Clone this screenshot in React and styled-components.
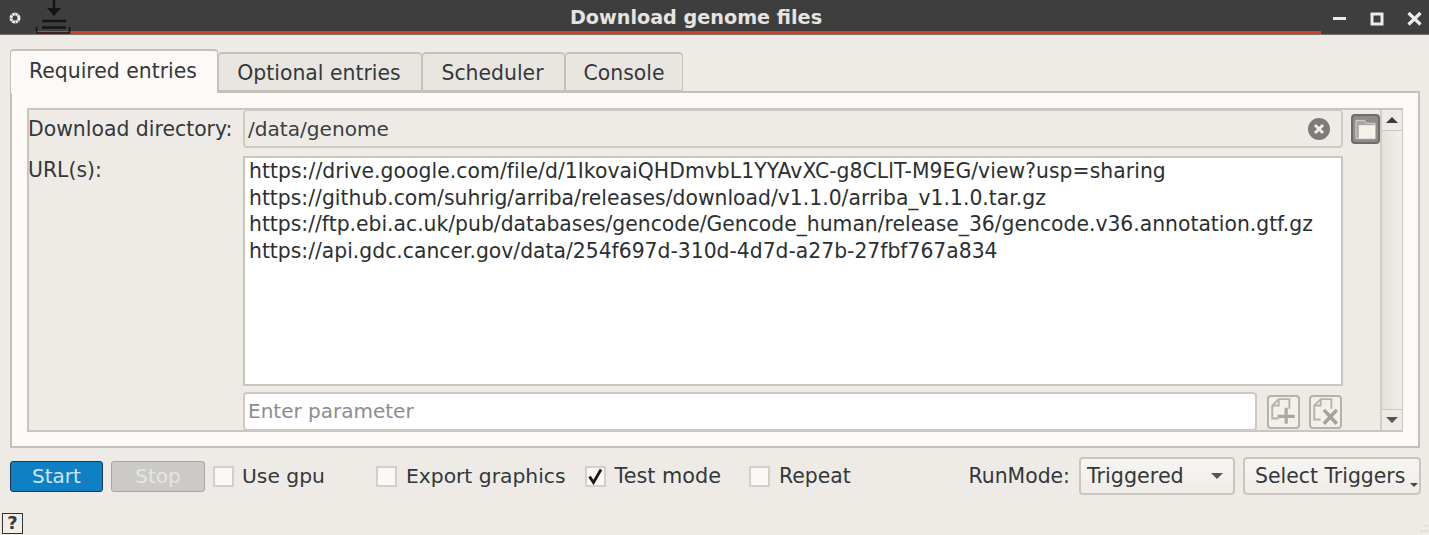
import React from "react";
import styled, { createGlobalStyle } from "styled-components";

const Global = createGlobalStyle`
  html, body { margin: 0; padding: 0; width: 1429px; height: 535px; overflow: hidden; background: #eeebe7; }
  * { box-sizing: border-box; }
  body { font-family: "DejaVu Sans", sans-serif; font-size: 20.4px; color: #2e3436; }
`;

const Win = styled.div`
  width: 1429px; height: 535px; display: flex; flex-direction: column; position: relative; background: #eeebe7;
`;
const TitleBar = styled.div`
  height: 35px; flex: none; background: #3e3e3e; position: relative; display: flex; align-items: center;
  border-bottom: 1px solid #77746f;
`;
const RedLine = styled.div`
  position: absolute; left: 35px; width: 1286px; top: 31px; height: 3px; background: #cf412e;
`;
const TitleText = styled.div`
  position: absolute; left: 0; right: 37px; top: 6px; text-align: center; font-weight: 700; font-size: 19.2px; color: #e6e4e0; line-height: 24px;
`;
const GearSlot = styled.svg`
  position: absolute; left: 8px; top: 11px;
`;
const AppIcon = styled.svg`
  position: absolute; left: 35px; top: 0;
`;
const WinButtons = styled.div`
  position: absolute; right: 0; top: 0; height: 34px; width: 110px;
`;
const WinSvg = styled.svg`position: absolute; left: 0; top: 0;`;

const Body = styled.div`
  flex: 1; padding: 14px 9px 0 10px; display: flex; flex-direction: column;
`;
const Tabs = styled.div`
  display: flex; align-items: flex-end; height: 42px; position: relative; z-index: 1;
`;
const Tab = styled.div`
  height: ${p => (p.$active ? "44px" : "39px")};
  width: ${p => p.$w}px;
  margin-bottom: ${p => (p.$active ? "-2px" : "0")};
  background: ${p => (p.$active ? "#fcf9f6" : "#e9e6e2")};
  border: 1px solid #c4c1bb;
  border-width: 2px 1.5px 0 1.5px;
  border-bottom: ${p => (p.$active ? "none" : "1px solid #c4c1bb")};
  border-radius: 4px 4px 0 0;
  text-align: center;
  padding-right: ${p => p.$pr ?? 2}px;
  line-height: ${p => (p.$active ? "40px" : "38px")};
  font-size: 20.4px;
  color: #33383a;
`;
const Panel = styled.div`
  width: 1410px; height: 357px; background: #fcf9f6; border: 2px solid #c4c1bb; padding: 15px 15px 14px;
`;
const Scroll = styled.div`
  height: 100%; width: 100%; background: #eeebe7; border: 2px solid #c9c6c0; border-right-width: 1px; display: flex;
`;
const FormArea = styled.div`
  flex: 1; display: grid; grid-template-columns: 214px 1100px 1fr; grid-template-rows: 38px 238px 45px; align-content: start;
`;
const Label = styled.div`
  line-height: 38px; font-size: 20.4px; color: #33383a; white-space: nowrap; margin-left: -1px;
`;
const UrlLabel = styled(Label)`
  line-height: 26px; padding-top: 9px;
`;
const DirField = styled.div`
  height: 38px; background: #eeebe7; border: 2px solid #cdcac4; border-top-width: 1px; border-radius: 4px; display: flex; align-items: center;
  padding: 0 11px 0 3px; justify-content: space-between; color: #3a3f41; font-size: 20.1px;
`;
const FolderCell = styled.div`
  padding: 4px 0 0 8px;
`;
const TextCell = styled.div`
  padding-top: 8px;
`;
const UrlBox = styled.div`
  background: #fff; border: 2px solid #c9c6c0; height: 230px; padding: 0 4px; font-size: 20.33px; line-height: 26.6px; color: #2b2f31; white-space: nowrap;
`;
const UrlLine = styled.div`
  letter-spacing: ${p => p.$ls}px;
`;
const EmptyCell = styled.div``;
const ParamRow = styled.div`
  grid-column: 2; display: flex; align-items: center; height: 39px; justify-content: space-between; margin-top: 6px;
`;
const ParamInput = styled.div`
  width: 1014px; height: 39px; background: #fff; border: 2px solid #cdcac4; border-radius: 4px; padding: 0 3px; line-height: 35px; color: #8b8d8d; font-size: 20px;
`;
const ParamButtons = styled.div`display: flex; gap: 9px; margin-right: 1px;`;
const IconBtn = styled.div`
  width: 33px; height: 34px; border: 2px solid #b5b2ac; border-radius: 4px; background: #f3f0ec; display: flex; align-items: center; justify-content: center;
`;
const FolderBtn = styled.div`
  width: 29px; height: 30px; border: 2px solid #6f6d69; border-radius: 4px; background: #8f8d89; display: flex; align-items: center; justify-content: center;
`;
const ScrollBar = styled.div`
  width: 22px; flex: none; border-left: 2px solid #cfccc6; background: linear-gradient(90deg, #e4e1dc, #f2efeb); display: flex; flex-direction: column; justify-content: space-between;
`;
const ArrowCell = styled.div`
  height: 21px; background: #eeebe7; display: flex; align-items: center; justify-content: center;
  border-${p => p.$edge}: 1px solid #c9c6c0;
`;
const Controls = styled.div`
  display: flex; align-items: center; height: 32px; margin-top: 12px; position: relative;
`;
const Btn = styled.div`
  width: ${p => p.$w}px; height: 31px; margin-right: 8px; border-radius: 3px; text-align: center; line-height: 28px; font-size: 20px;
  background: ${p => (p.$primary ? "#0f80c4" : "#cbcac8")};
  border: 1.5px solid ${p => (p.$primary ? "#173a52" : "#a8a6a2")};
  color: ${p => (p.$primary ? "#cfe6f5" : "#e6e5e3")};
`;
const Check = styled.label`
  display: flex; align-items: center; margin-right: ${p => p.$mr}px; font-size: ${p => p.$size ?? 20.3}px; color: #33383a; white-space: nowrap;
`;
const Box = styled.span`
  width: 21px; height: 21px; background: #fbf9f7; border: 2px solid #d3d0ca; margin-right: ${p => p.$gap ?? 9}px; display: inline-flex; align-items: center; justify-content: center; flex: none;
`;
const Spacer = styled.div`flex: 1;`;
const RunLabel = styled.div`
  font-size: 20.4px; color: #33383a; margin-right: 9px;
`;
const Combo = styled.div`
  width: 156px; height: 38px; border: 2px solid #c9c6c0; border-radius: 4px; background: linear-gradient(#f7f5f2, #efece8); display: flex; align-items: center; justify-content: space-between; padding: 0 10px 0 6px; margin-right: 8px; color: #33383a; font-size: 20.7px;
`;
const Caret = styled.span`
  width: 0; height: 0; border-left: 6px solid transparent; border-right: 6px solid transparent; border-top: 6px solid #555;
`;
const TriggerBtn = styled.div`
  width: 178px; height: 38px; margin-right: -1px; border: 2px solid #c9c6c0; border-radius: 4px; background: linear-gradient(#f7f5f2, #efece8); padding: 0 0 0 10px; line-height: 35px; color: #33383a; position: relative; white-space: nowrap;
`;
const SmallCaret = styled.span`
  position: absolute; right: 1px; bottom: 6px; width: 0; height: 0; border-left: 4.5px solid transparent; border-right: 4.5px solid transparent; border-top: 4.5px solid #444;
`;
const Help = styled.div`
  position: absolute; left: 2px; top: 513px; width: 21px; height: 21px; border: 1.5px solid #333; font-weight: 700; font-size: 18px; line-height: 18px; text-align: center; color: #3a3a3a; background: #f1eeea;
`;
const Grip = styled.svg`position: absolute; right: 0; bottom: 0;`;

const urls = [
  ["https://drive.google.com/file/d/1IkovaiQHDmvbL1YYAvXC-g8CLlT-M9EG/view?usp=sharing", 0.06],
  ["https://github.com/suhrig/arriba/releases/download/v1.1.0/arriba_v1.1.0.tar.gz", 0.01],
  ["https://ftp.ebi.ac.uk/pub/databases/gencode/Gencode_human/release_36/gencode.v36.annotation.gtf.gz", 0],
  ["https://api.gdc.cancer.gov/data/254f697d-310d-4d7d-a27b-27fbf767a834", 0],
];

export default function App() {
  return (
    <Win>
      <Global />
      <TitleBar>
        <RedLine />
        <GearSlot width="14" height="14" viewBox="0 0 14 14">
          <circle cx="7" cy="7" r="4" fill="none" stroke="#f0eeea" strokeWidth="3" strokeDasharray="2.6 0.5" />
        </GearSlot>
        <AppIcon width="36" height="35" viewBox="0 0 36 35">
          <path d="M19 0V10" stroke="#141414" strokeWidth="2.4" fill="none" />
          <path d="M12 8H26L19 16Z" fill="#141414" />
          <path d="M7 21H31M7 27.5H31" stroke="#141414" strokeWidth="2.4" fill="none" />
          <path d="M1.5 27V33H34.5V27" stroke="#141414" strokeWidth="1.6" fill="none" />
        </AppIcon>
        <TitleText>Download genome files</TitleText>
        <WinButtons>
          <WinSvg width="110" height="34" viewBox="0 0 110 34">
            <path d="M14 18.5H27" stroke="#eeeae6" strokeWidth="3" />
            <rect x="53" y="14" width="10" height="10" fill="none" stroke="#eeeae6" strokeWidth="3" />
            <path d="M89.5 13L101.5 24.5M101.5 13L89.5 24.5" stroke="#eeeae6" strokeWidth="3.2" />
          </WinSvg>
        </WinButtons>
      </TitleBar>
      <Body>
        <Tabs>
          <Tab $active $w={208}>Required entries</Tab>
          <Tab $w={204}>Optional entries</Tab>
          <Tab $w={143}>Scheduler</Tab>
          <Tab $w={118} $pr={0}>Console</Tab>
        </Tabs>
        <Panel>
          <Scroll>
            <FormArea>
              <Label>Download directory:</Label>
              <DirField>
                /data/genome
                <svg width="22" height="22" viewBox="0 0 22 22">
                  <circle cx="11" cy="11" r="11" fill="#7d7b77" />
                  <path d="M7 7L15 15M15 7L7 15" stroke="#eeebe7" strokeWidth="3" />
                </svg>
              </DirField>
              <FolderCell>
                <FolderBtn>
                  <svg width="23" height="24" viewBox="0 0 24 24">
                    <path d="M2 3H11L13 6H22V22H2Z" fill="#a9a7a3" stroke="#d8d6d2" strokeWidth="1" />
                    <rect x="5" y="8" width="17" height="14" fill="#f3f1e8" />
                  </svg>
                </FolderBtn>
              </FolderCell>
              <UrlLabel>URL(s):</UrlLabel>
              <TextCell>
                <UrlBox>
                  {urls.map(([u, ls]) => <UrlLine key={u} $ls={ls}>{u}</UrlLine>)}
                </UrlBox>
              </TextCell>
              <EmptyCell />
              <EmptyCell />
              <ParamRow>
                <ParamInput>Enter parameter</ParamInput>
                <ParamButtons>
                  <IconBtn>
                    <svg width="29" height="30" viewBox="0 0 27 28">
                      <path d="M9 20H3V8L9 2H19V11" fill="none" stroke="#b5b2ac" strokeWidth="1.8" />
                      <path d="M9 2V8H3" fill="none" stroke="#b5b2ac" strokeWidth="1.8" />
                      <path d="M16 10V25M8 18H24" stroke="#aaa8a3" strokeWidth="3" />
                    </svg>
                  </IconBtn>
                  <IconBtn>
                    <svg width="29" height="30" viewBox="0 0 27 28">
                      <path d="M9 21H3V8L9 2H19V11" fill="none" stroke="#b5b2ac" strokeWidth="1.8" />
                      <path d="M9 2V8H3" fill="none" stroke="#b5b2ac" strokeWidth="1.8" />
                      <path d="M12 12L24 25M24 12L12 25" stroke="#a3a19c" strokeWidth="3.2" />
                    </svg>
                  </IconBtn>
                </ParamButtons>
              </ParamRow>
            </FormArea>
            <ScrollBar>
              <ArrowCell $edge="bottom">
                <svg width="14" height="8" viewBox="0 0 14 8"><path d="M1 7L7 1L13 7Z" fill="#3a3a3a" /></svg>
              </ArrowCell>
              <ArrowCell $edge="top">
                <svg width="14" height="8" viewBox="0 0 14 8"><path d="M1 1L7 7L13 1Z" fill="#555" /></svg>
              </ArrowCell>
            </ScrollBar>
          </Scroll>
        </Panel>
        <Controls>
          <Btn $primary $w={93}>Start</Btn>
          <Btn $w={94}>Stop</Btn>
          <Check $mr={51}><Box $gap={8} />Use gpu</Check>
          <Check $mr={19}><Box />Export graphics</Check>
          <Check $mr={28} $size={20.8}>
            <Box>
              <svg width="17" height="17" viewBox="0 0 17 17"><path d="M2.5 8.5L6.5 14.5L14 1.5" fill="none" stroke="#1a1a1a" strokeWidth="2.8" /></svg>
            </Box>
            Test mode
          </Check>
          <Check $mr={0} $size={20.4}><Box />Repeat</Check>
          <Spacer />
          <RunLabel>RunMode:</RunLabel>
          <Combo>Triggered<Caret /></Combo>
          <TriggerBtn>Select Triggers<SmallCaret /></TriggerBtn>
        </Controls>
      </Body>
      <Help>?</Help>
      <Grip width="12" height="12" viewBox="0 0 12 12">
        <g fill="#cfccc6"><rect x="8" y="2" width="1.5" height="1.5" /><rect x="4" y="7" width="1.5" height="1.5" /><rect x="8" y="7" width="1.5" height="1.5" /></g>
      </Grip>
    </Win>
  );
}
